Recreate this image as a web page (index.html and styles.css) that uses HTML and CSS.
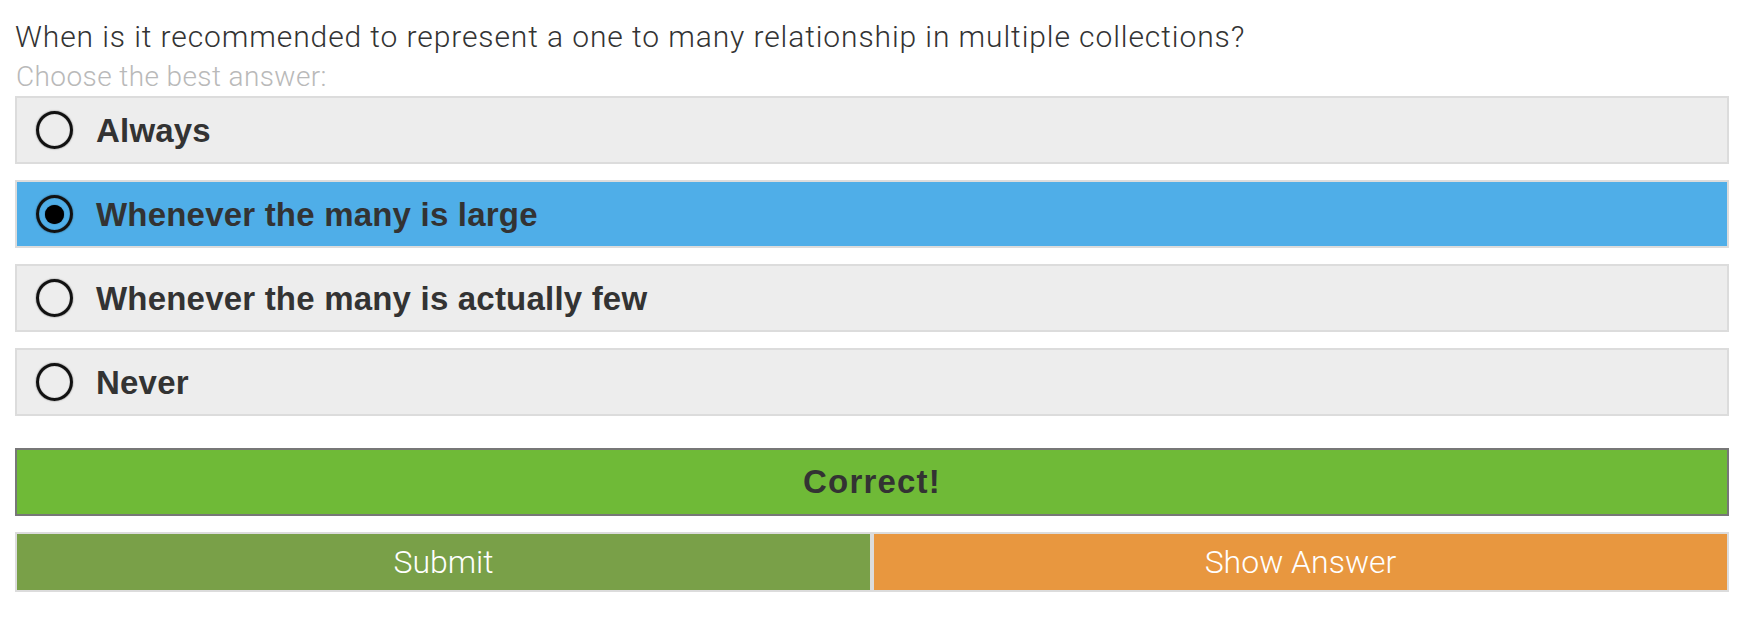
FILE: index.html
```html
<!DOCTYPE html>
<html lang="en">
<head>
<meta charset="utf-8">
<title>Quiz</title>
<link rel="stylesheet" href="styles.css">
</head>
<body>
<div class="quiz">
  <div class="question">When is it recommended to represent a one to many relationship in multiple collections?</div>
  <div class="hint">Choose the best answer:</div>
  <div class="options">
    <div class="option"><span class="radio"></span><span class="label">Always</span></div>
    <div class="option selected"><span class="radio"></span><span class="label">Whenever the many is large</span></div>
    <div class="option"><span class="radio"></span><span class="label">Whenever the many is actually few</span></div>
    <div class="option"><span class="radio"></span><span class="label">Never</span></div>
  </div>
  <div class="result">Correct!</div>
  <div class="actions">
    <div class="btn submit">Submit</div>
    <div class="btn show">Show Answer</div>
  </div>
</div>
</body>
</html>
```

FILE: styles.css
```css
* { box-sizing: border-box; }
html, body { margin: 0; padding: 0; background: #fff; }
body { font-family: "Liberation Sans", Arial, sans-serif; }

.quiz {
  padding: 18px 20px 0 15px;
}

.question {
  font-family: Roboto, "Liberation Sans", sans-serif;
  font-weight: 300;
  font-size: 30px;
  letter-spacing: 0.9px;
  line-height: 38px;
  color: #333;
}

.hint {
  margin-top: 4px;
  font-family: Roboto, "Liberation Sans", sans-serif;
  font-weight: 300;
  font-size: 28px;
  letter-spacing: 0.4px;
  line-height: 34px;
  color: #b9b9b9;
  padding-left: 1px;
}

.options {
  margin-top: 2px;
  display: flex;
  flex-direction: column;
  gap: 16px;
}

.option {
  height: 68px;
  border: 2px solid #dcdcdc;
  background: #ededed;
  display: flex;
  align-items: center;
  padding-left: 19px;
  gap: 23px;
}

.option.selected { background: #4faee8; }

.radio {
  width: 37px;
  height: 38px;
  border: 3px solid #111;
  border-radius: 50%;
  display: flex;
  align-items: center;
  justify-content: center;
  flex: none;
  box-shadow: 0 0 1.5px rgba(0,0,0,0.7), inset 0 0 1px rgba(0,0,0,0.6);
}

.option.selected .radio::after {
  content: "";
  width: 19px;
  height: 19px;
  border-radius: 50%;
  background: #000;
  box-shadow: 0 0 1px #000;
}

.label {
  font-weight: bold;
  font-size: 33px;
  letter-spacing: 0.2px;
  color: #333;
  line-height: 1;
}

.result {
  margin-top: 32px;
  height: 68px;
  border: 2px solid #777;
  background: #6fba37;
  display: flex;
  align-items: center;
  justify-content: center;
  font-weight: bold;
  font-size: 33px;
  letter-spacing: 1.2px;
  color: #333;
}

.actions {
  margin-top: 16px;
  display: flex;
  height: 60px;
}

.btn {
  flex: 1;
  border: 2px solid #dcdcdc;
  display: flex;
  align-items: center;
  justify-content: center;
  font-family: Roboto, "Liberation Sans", sans-serif;
  font-weight: 300;
  font-size: 32px;
  color: #fff;
}

.btn.submit { background: #79a048; }
.btn.show { background: #e8973f; }
```
